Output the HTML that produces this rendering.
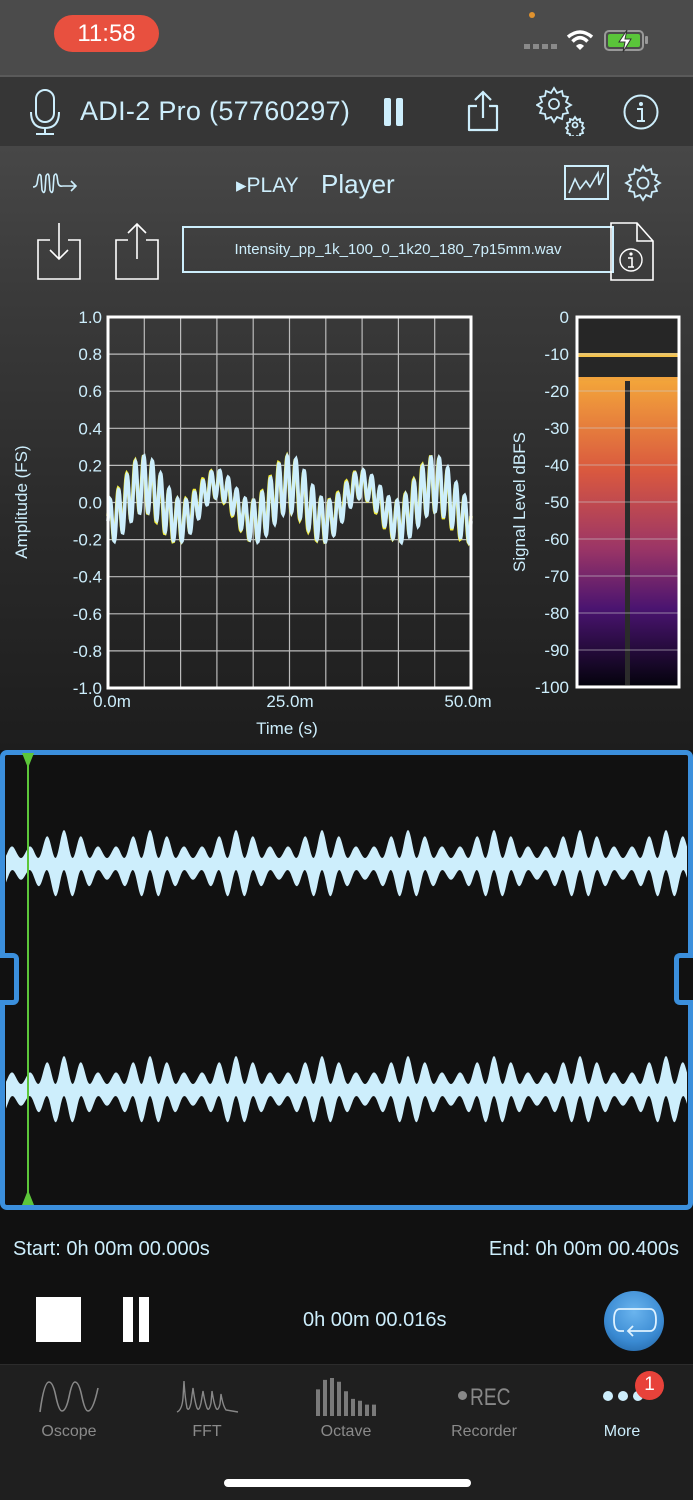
<!DOCTYPE html>
<html><head><meta charset="utf-8">
<style>
*{margin:0;padding:0;box-sizing:border-box}
body{width:693px;height:1500px;position:relative;overflow:hidden;background:#111;font-family:"Liberation Sans",sans-serif;color:#cdeefc}
.abs{position:absolute}
.t{position:absolute;white-space:nowrap}
.tab{position:absolute;top:1423px;width:100px;text-align:center;font-size:16px;color:#8a8a8a}
</style></head><body>
<!-- status bar -->
<div class="abs" style="left:0;top:0;width:693px;height:76px;background:#4b4b4b"></div>
<div class="abs" style="left:54px;top:15px;width:105px;height:37px;border-radius:19px;background:#e8503f"></div>
<div class="t" style="left:54px;top:20px;width:105px;text-align:center;color:#fff;font-size:24px">11:58</div>
<div class="abs" style="left:529px;top:12px;width:6px;height:6px;border-radius:3px;background:#e0922e"></div>
<div class="abs" style="left:524px;top:44px;width:33px;height:5px;background:repeating-linear-gradient(90deg,#8a8a8a 0 6px,transparent 6px 9px)"></div>
<svg class="abs" style="left:566px;top:29px" width="28" height="22" viewBox="0 0 28 22"><path d="M2 8 Q14 -2 26 8" stroke="#fff" stroke-width="3.5" fill="none"/><path d="M6.5 12.5 Q14 5 21.5 12.5" stroke="#fff" stroke-width="3.5" fill="none"/><path d="M10 17 L14 21 L18 17 Q14 13 10 17Z" fill="#fff"/></svg>
<div class="abs" style="left:604px;top:30px;width:40px;height:21px;border:2px solid #999;border-radius:5px;padding:2px"><div style="width:100%;height:100%;background:#5ac53a;border-radius:2px"></div></div>
<div class="abs" style="left:645px;top:36px;width:3px;height:8px;background:#999;border-radius:1px"></div>
<svg class="abs" style="left:615px;top:29px" width="20" height="24" viewBox="0 0 20 24"><path d="M12 1 L4 13 H10 L8 23 L16 10 H10 Z" fill="#fff" stroke="#333" stroke-width="1"/></svg>
<div class="abs" style="left:0;top:75px;width:693px;height:2px;background:#5a5a5a"></div>
<!-- header -->
<div class="abs" style="left:0;top:77px;width:693px;height:70px;background:#363636"></div>
<div class="abs" style="left:0;top:146px;width:693px;height:2px;background:#474747"></div>
<svg class="abs" style="left:28px;top:88px" width="34" height="48" viewBox="0 0 34 48"><rect x="8" y="2" width="18" height="32" rx="9" fill="none" stroke="#cdeefc" stroke-width="2"/><path d="M3 24 Q3 40 17 40 Q31 40 31 24" fill="none" stroke="#cdeefc" stroke-width="2"/><path d="M17 40V46M8 46H26" stroke="#cdeefc" stroke-width="2"/></svg>
<div class="t" style="left:80px;top:96px;font-size:27px;color:#cdeefc;letter-spacing:0.3px">ADI-2 Pro (57760297)</div>
<div class="abs" style="left:384px;top:98px;width:7px;height:28px;background:#cdeefc;border-radius:2px"></div>
<div class="abs" style="left:396px;top:98px;width:7px;height:28px;background:#cdeefc;border-radius:2px"></div>
<svg class="abs" style="left:465px;top:90px" width="36" height="42" viewBox="0 0 36 42"><path d="M12 16H4V40H32V16H24" fill="none" stroke="#cdeefc" stroke-width="2.2" stroke-linejoin="round"/><path d="M18 28V3M10 10L18 2L26 10" fill="none" stroke="#cdeefc" stroke-width="2.2"/></svg>
<svg class="abs" style="left:536px;top:86px" width="52" height="50" viewBox="0 0 52 50"><g fill="none" stroke="#cdeefc" stroke-width="1.8"><circle cx="18" cy="18" r="5"/><path d="M18 2l3 5 5-2 1 5 5 1-2 5 5 3-5 3 2 5-5 1-1 5-5-2-3 5-3-5-5 2-1-5-5-1 2-5-5-3 5-3-2-5 5-1 1-5 5 2z"/><circle cx="39" cy="39" r="2.5"/><path d="M39 31l2 3 3-1 0 3 3 1-1 3 2 2-2 2 1 3-3 1 0 3-3-1-2 3-2-3-3 1 0-3-3-1 1-3-2-2 2-2-1-3 3-1 0-3 3 1z"/></g></svg>
<svg class="abs" style="left:622px;top:93px" width="38" height="38" viewBox="0 0 38 38"><circle cx="19" cy="19" r="16.5" fill="none" stroke="#cdeefc" stroke-width="2"/><circle cx="19" cy="11" r="2" fill="#cdeefc"/><path d="M15 16H20V28M15 28H23" fill="none" stroke="#cdeefc" stroke-width="2"/></svg>
<!-- player area -->
<div class="abs" style="left:0;top:148px;width:693px;height:602px;background:linear-gradient(#474747,#3a3a3a 25%,#2b2b2b 60%,#1d1d1d)"></div>
<svg class="abs" style="left:32px;top:170px" width="48" height="26" viewBox="0 0 48 26"><path d="M1 17 Q4 17 5 14 L6 8 Q7 2 9 6 L10 20 Q12 25 13 20 L14 6 Q16 2 17 6 L18 20 Q20 25 21 20 L22 6 Q24 2 25 6 L26 13 Q27 17 31 16 H44M39 11 L44 16 L39 21" fill="none" stroke="#cdeefc" stroke-width="1.6"/></svg>
<div class="t" style="left:236px;top:173px;font-size:21px;color:#cdeefc">▸PLAY</div>
<div class="t" style="left:321px;top:169px;font-size:26px;color:#cdeefc">Player</div>
<div class="abs" style="left:564px;top:165px;width:45px;height:35px;border:2px solid #cdeefc"></div>
<svg class="abs" style="left:566px;top:167px" width="41" height="31" viewBox="0 0 41 31"><path d="M3 26 L9 12 L14 22 L20 14 L24 20 L32 6 L33 18 L38 6" fill="none" stroke="#cdeefc" stroke-width="1.6"/></svg>
<svg class="abs" style="left:624px;top:164px" width="38" height="38" viewBox="0 0 38 38"><g fill="none" stroke="#cdeefc" stroke-width="1.8"><circle cx="19" cy="19" r="5.5"/><path d="M19 2l3 5 5-2 1 5 5 1-2 5 5 3-5 3 2 5-5 1-1 5-5-2-3 5-3-5-5 2-1-5-5-1 2-5-5-3 5-3-2-5 5-1 1-5 5 2z"/></g></svg>
<svg class="abs" style="left:36px;top:222px" width="46" height="60" viewBox="0 0 46 60"><path d="M14 18H2V57H44V18H32" fill="none" stroke="#fff" stroke-width="1.6"/><path d="M23 1V37M14 28L23 37L32 28" fill="none" stroke="#fff" stroke-width="1.6"/></svg>
<svg class="abs" style="left:114px;top:222px" width="46" height="60" viewBox="0 0 46 60"><path d="M14 18H2V57H44V18H32" fill="none" stroke="#fff" stroke-width="1.6"/><path d="M23 37V2M14 11L23 2L32 11" fill="none" stroke="#fff" stroke-width="1.6"/></svg>
<div class="abs" style="left:182px;top:226px;width:432px;height:47px;border:2px solid #cdeefc"></div>
<div class="t" style="left:182px;top:241px;width:432px;text-align:center;font-size:15px;color:#cdeefc">Intensity_pp_1k_100_0_1k20_180_7p15mm.wav</div>
<svg class="abs" style="left:609px;top:221px" width="46" height="62" viewBox="0 0 46 62"><path d="M2 2H28L44 20V59H2Z M28 2V20H44" fill="none" stroke="#fff" stroke-width="1.6"/><circle cx="22" cy="39" r="11" fill="none" stroke="#fff" stroke-width="1.4"/><circle cx="22" cy="33" r="1.6" fill="#fff"/><path d="M19 37H23V46M19 46H25" stroke="#fff" stroke-width="1.6" fill="none"/></svg>
<!-- chart -->
<svg class="abs" style="left:0;top:300px" width="693" height="450" id="ch">
<g font-family="Liberation Sans" font-size="17" fill="#cdeefc" text-anchor="end" id="ylab"></g>
<text transform="translate(27,202) rotate(-90)" font-family="Liberation Sans" font-size="17" fill="#cdeefc" text-anchor="middle">Amplitude (FS)</text>
<text transform="translate(525,202) rotate(-90)" font-family="Liberation Sans" font-size="17" fill="#cdeefc" text-anchor="middle">Signal Level dBFS</text>
<g font-family="Liberation Sans" font-size="17" fill="#cdeefc" text-anchor="middle"><text x="112" y="407">0.0m</text><text x="290" y="407">25.0m</text><text x="468" y="407">50.0m</text><text x="287" y="434">Time (s)</text></g>
<g id="grid" stroke="#bbb" stroke-width="1.2"></g>
<path id="wy" fill="none" stroke="#f5f03a" stroke-width="3.5"/>
<path id="wb" fill="none" stroke="#cdeefc" stroke-width="3.5"/>
<rect x="108" y="17" width="363" height="371" fill="none" stroke="#fff" stroke-width="3"/>
<defs><linearGradient id="mg" x1="0" y1="0" x2="0" y2="1"><stop offset="0" stop-color="#f3a53a"/><stop offset="0.3" stop-color="#d9583f"/><stop offset="0.55" stop-color="#9c3666"/><stop offset="0.75" stop-color="#4a1470"/><stop offset="1" stop-color="#05030e"/></linearGradient></defs>
<rect x="578" y="19" width="100" height="366" fill="#262626"/>
<rect x="578" y="80" width="100" height="305" fill="url(#mg)"/>
<rect x="625" y="80" width="5" height="305" fill="#2b2b2b"/>
<rect x="578" y="53" width="100" height="4" fill="#f5c24a"/>
<rect x="578" y="77" width="100" height="4" fill="#f0a23c"/>
<g id="mgrid" stroke="#cccccc" stroke-opacity="0.6" stroke-width="1"></g>
<g font-family="Liberation Sans" font-size="17" fill="#cdeefc" text-anchor="end" id="dlab"></g>
<rect x="577" y="17" width="102" height="370" fill="none" stroke="#fff" stroke-width="3"/>
</svg>
<!-- waveform panel -->
<div class="abs" style="left:0;top:750px;width:693px;height:460px;border:5px solid #3b8fdc;border-radius:7px;background:#111"></div>
<div class="abs" style="left:0;top:953px;width:19px;height:52px;border:5px solid #3b8fdc;border-left:none;border-radius:0 6px 6px 0;background:#111"></div>
<div class="abs" style="left:674px;top:953px;width:19px;height:52px;border:5px solid #3b8fdc;border-right:none;border-radius:6px 0 0 6px;background:#111"></div>
<svg class="abs" style="left:0;top:750px" width="693" height="460" id="wf"></svg>
<!-- bottom controls -->
<div class="t" style="left:13px;top:1238px;font-size:20px;color:#cdeefc">Start: 0h 00m 00.000s</div>
<div class="t" style="right:14px;top:1238px;font-size:20px;color:#cdeefc">End: 0h 00m 00.400s</div>
<div class="abs" style="left:36px;top:1297px;width:45px;height:45px;background:#fff"></div>
<div class="abs" style="left:123px;top:1297px;width:10px;height:45px;background:#fff"></div>
<div class="abs" style="left:139px;top:1297px;width:10px;height:45px;background:#fff"></div>
<div class="t" style="left:303px;top:1309px;font-size:20px;color:#cdeefc">0h 00m 00.016s</div>
<div class="abs" style="left:604px;top:1291px;width:60px;height:60px;border-radius:30px;background:radial-gradient(circle at 50% 35%,#6ab4ee,#3a8ad2 60%,#1e5c9a)"></div>
<svg class="abs" style="left:610px;top:1304px" width="50" height="36" viewBox="0 0 50 36"><path d="M14 27 H10 Q4 27 4 16 Q4 5 10 5 H40 Q46 5 46 16 Q46 27 40 27 H19M23 22 L18 27 L23 32" fill="none" stroke="#dff2ff" stroke-width="1.8"/></svg>
<!-- tab bar -->
<div class="abs" style="left:0;top:1364px;width:693px;height:136px;background:#1f1f1f;border-top:1px solid #2c2c2c"></div>
<svg class="abs" style="left:38px;top:1380px" width="62" height="34" viewBox="0 0 62 34"><path d="M2 32 Q6 2 11 2 Q15 2 18 17 Q21 31 24 31 Q28 31 31 17 Q34 2 37 2 Q41 2 44 17 Q47 31 50 31 Q55 31 60 8" fill="none" stroke="#888" stroke-width="1.6"/></svg>
<div class="tab" style="left:19px">Oscope</div>
<svg class="abs" style="left:176px;top:1378px" width="64" height="36" viewBox="0 0 64 36"><path d="M1 34 Q6 32 7 20 L8 3 Q9 20 11 30 Q13 34 15 25 L17 10 Q19 25 21 30 Q23 34 25 25 L27 13 Q29 25 31 30 Q33 34 35 25 L36 13 Q38 26 40 30 Q42 34 44 26 L45 16 Q47 28 50 32 L62 34" fill="none" stroke="#888" stroke-width="1.4"/></svg>
<div class="tab" style="left:157px">FFT</div>
<div class="abs" style="left:316px;top:1378px;width:62px;height:38px;background:repeating-linear-gradient(90deg,#7a7a7a 0 4px,transparent 4px 7px);clip-path:polygon(0 30%,7px 30%,7px 5%,14px 5%,14px 0,21px 0,21px 10%,28px 10%,28px 35%,35px 35%,35px 55%,42px 55%,42px 60%,49px 60%,49px 70%,62px 70%,62px 100%,0 100%)"></div>
<div class="tab" style="left:296px">Octave</div>
<div class="abs" style="left:458px;top:1391px;width:9px;height:9px;border-radius:5px;background:#888"></div>
<div class="t" style="left:470px;top:1384px;font-size:24px;color:#888;transform:scaleX(0.8);transform-origin:left">REC</div>
<div class="tab" style="left:434px">Recorder</div>
<div class="abs" style="left:603px;top:1391px;width:10px;height:10px;border-radius:5px;background:#cdeefc"></div>
<div class="abs" style="left:618px;top:1391px;width:10px;height:10px;border-radius:5px;background:#cdeefc"></div>
<div class="abs" style="left:633px;top:1391px;width:10px;height:10px;border-radius:5px;background:#cdeefc"></div>
<div class="abs" style="left:635px;top:1371px;width:29px;height:29px;border-radius:15px;background:#e8423a"></div>
<div class="t" style="left:635px;top:1374px;width:29px;text-align:center;font-size:19px;color:#fff">1</div>
<div class="tab" style="left:572px;color:#cdeefc">More</div>
<div class="abs" style="left:224px;top:1479px;width:247px;height:8px;border-radius:4px;background:#fff"></div>
<script>
(function(){
var ns="http://www.w3.org/2000/svg";
function el(p,tag,a,txt){var e=document.createElementNS(ns,tag);for(var k in a)e.setAttribute(k,a[k]);if(txt)e.textContent=txt;p.appendChild(e);return e;}
var g=document.getElementById('grid'),yl=document.getElementById('ylab');
var x0=108,x1=471,y0=17,y1=388;
for(var i=1;i<10;i++){var x=x0+(x1-x0)*i/10;el(g,'line',{x1:x,x2:x,y1:y0,y2:y1});var y=y0+(y1-y0)*i/10;el(g,'line',{x1:x0,x2:x1,y1:y,y2:y});}
var labs=['1.0','0.8','0.6','0.4','0.2','0.0','-0.2','-0.4','-0.6','-0.8','-1.0'];
for(var i=0;i<11;i++)el(yl,'text',{x:102,y:y0+(y1-y0)*i/10+6},labs[i]);
var mg=document.getElementById('mgrid'),dl=document.getElementById('dlab');
for(var i=0;i<11;i++){var y=17+370*i/10;if(i>0&&i<10)el(mg,'line',{x1:578,x2:678,y1:y,y2:y});el(dl,'text',{x:569,y:y+6},i==0?'0':'-'+(i*10));}
function sig(t,ph){return 0.1*Math.sin(2*Math.PI*(t-2.5)/10+ph)+0.15*Math.sin(2*Math.PI*t*0.86+ph*2)*(0.75+0.25*Math.cos(2*Math.PI*(t-25)/20));}
var pb='',py='';
for(var k=0;k<=1200;k++){var t=50*k/1200;var x=x0+(x1-x0)*k/1200;
var yb=202.5-sig(t,0)*185.5, yy=202.5-sig(t,0.12)*185.5;
pb+=(k?'L':'M')+x.toFixed(1)+' '+yb.toFixed(1);py+=(k?'L':'M')+x.toFixed(1)+' '+yy.toFixed(1);}
document.getElementById('wb').setAttribute('d',pb);document.getElementById('wy').setAttribute('d',py);
var wf=document.getElementById('wf');
function band(c,off){var top='',bot=[];
for(var x=6;x<=687;x+=1){var e=0.35+0.65*(0.5+0.5*Math.cos(2*Math.PI*(x+off)/86));
var f=0.5+0.5*Math.cos(2*Math.PI*(x+off)/17.2);var f2=0.5+0.5*Math.cos(2*Math.PI*(x+off)/17.2+Math.PI);
var yt=c-6-28*e*f;var yb=c+6+28*e*f2;
top+=(top?'L':'M')+x+' '+yt.toFixed(1);bot.unshift('L'+x+' '+yb.toFixed(1));}
el(wf,'path',{d:top+bot.join('')+'Z',fill:'#cdeefc'});}
band(114,22);band(340,22);
el(wf,'line',{x1:28,x2:28,y1:5,y2:455,stroke:'#5cc63a','stroke-width':2});
el(wf,'path',{d:'M22 3H34L28 18Z',fill:'#5cc63a'});
el(wf,'path',{d:'M22 455H34L28 440Z',fill:'#5cc63a'});
})();
</script>
</body></html>
